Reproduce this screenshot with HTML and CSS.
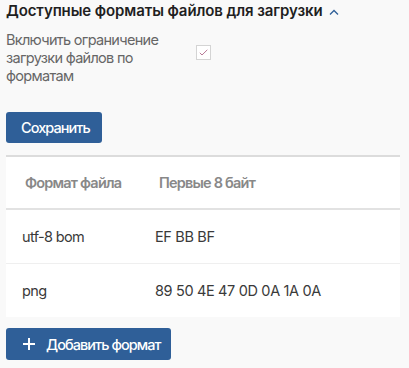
FILE: index.html
```html
<!DOCTYPE html>
<html lang="ru">
<head>
<meta charset="utf-8">
<link rel="stylesheet" href="styles.css">
</head>
<body>
<div class="page">
  <h2 class="title">Доступные форматы файлов для загрузки
    <svg class="chev" width="10" height="6" viewBox="0 0 10 6"><path d="M1 5.5L5 1.5L9 5.5" fill="none" stroke="#2f5f98" stroke-width="1.3"/></svg>
  </h2>
  <div class="option">
    <div class="option-label">Включить ограничение загрузки файлов по форматам</div>
    <div class="checkbox">
      <svg width="9" height="7" viewBox="0 0 9 7"><path d="M0.8 3.8L3 6L8.3 0.8" fill="none" stroke="#b06a8a" stroke-width="0.9"/></svg>
    </div>
  </div>
  <button class="btn btn-save">Сохранить</button>
  <div class="table">
    <div class="row head">
      <div class="c1">Формат файла</div>
      <div class="c2">Первые 8 байт</div>
    </div>
    <div class="row">
      <div class="c1">utf-8 bom</div>
      <div class="c2 hex">EF BB BF</div>
    </div>
    <div class="row last">
      <div class="c1">png</div>
      <div class="c2 hex">89 50 4E 47 0D 0A 1A 0A</div>
    </div>
  </div>
  <button class="btn btn-add">
    <svg width="14" height="14" viewBox="0 0 14 14"><path d="M7 1V13M1 7H13" stroke="#fff" stroke-width="2"/></svg>
    <span>Добавить формат</span>
  </button>
</div>
</body>
</html>
```
FILE: styles.css
```css
html, body { margin: 0; padding: 0; background: #f9f9f9; }
body { font-family: Inter, "Noto Sans", sans-serif; color: #333; }
.page { padding: 0 9px 0 6px; }
.title {
  margin: 0; padding-top: 1px;
  font-size: 15px; font-weight: 600; color: #1f1f1f;
  line-height: 20px; display: flex; align-items: center; gap: 6px;
  letter-spacing: -0.1px;
}
.chev { margin-top: 1px; }
.option { display: flex; align-items: flex-start; margin-top: 10px; }
.option-label { width: 186px; font-size: 14.5px; line-height: 18px; color: #666; letter-spacing: -0.7px; }
.checkbox {
  width: 13px; height: 13px; border: 1px solid #d4d4d4; background: #fff;
  margin: 14px 0 0 4px; display: flex; align-items: center; justify-content: center;
}
.btn {
  border: none; background: #2f5f98; color: #fff; border-radius: 3px;
  font-family: Inter, "Noto Sans", sans-serif; font-size: 14.5px; font-weight: 500;
  display: flex; align-items: center; cursor: pointer; letter-spacing: -0.95px;
}
.btn-save { margin-top: 27px; height: 31px; width: 96px; padding: 0 15px; }
.table { margin-top: 12px; background: #fff; border-top: 2px solid #dcdcdc; }
.row { display: flex; align-items: center; height: 53px; border-bottom: 1px solid #efefef; font-size: 14.5px; color: #3a3a3a; letter-spacing: -0.65px; }
.row .hex { letter-spacing: -0.35px; }
.row.head { height: 51px; border-bottom: 2px solid #e2e2e2; font-weight: 600; color: #888; letter-spacing: -0.8px; }
.row.last { border-bottom: none; }
.c1 { width: 133px; padding-left: 16px; }
.head .c1 { padding-left: 19px; width: 134px; }
.btn-add { margin-top: 11px; height: 32px; width: 165px; padding: 0 0 0 16px; gap: 10px; }
```
